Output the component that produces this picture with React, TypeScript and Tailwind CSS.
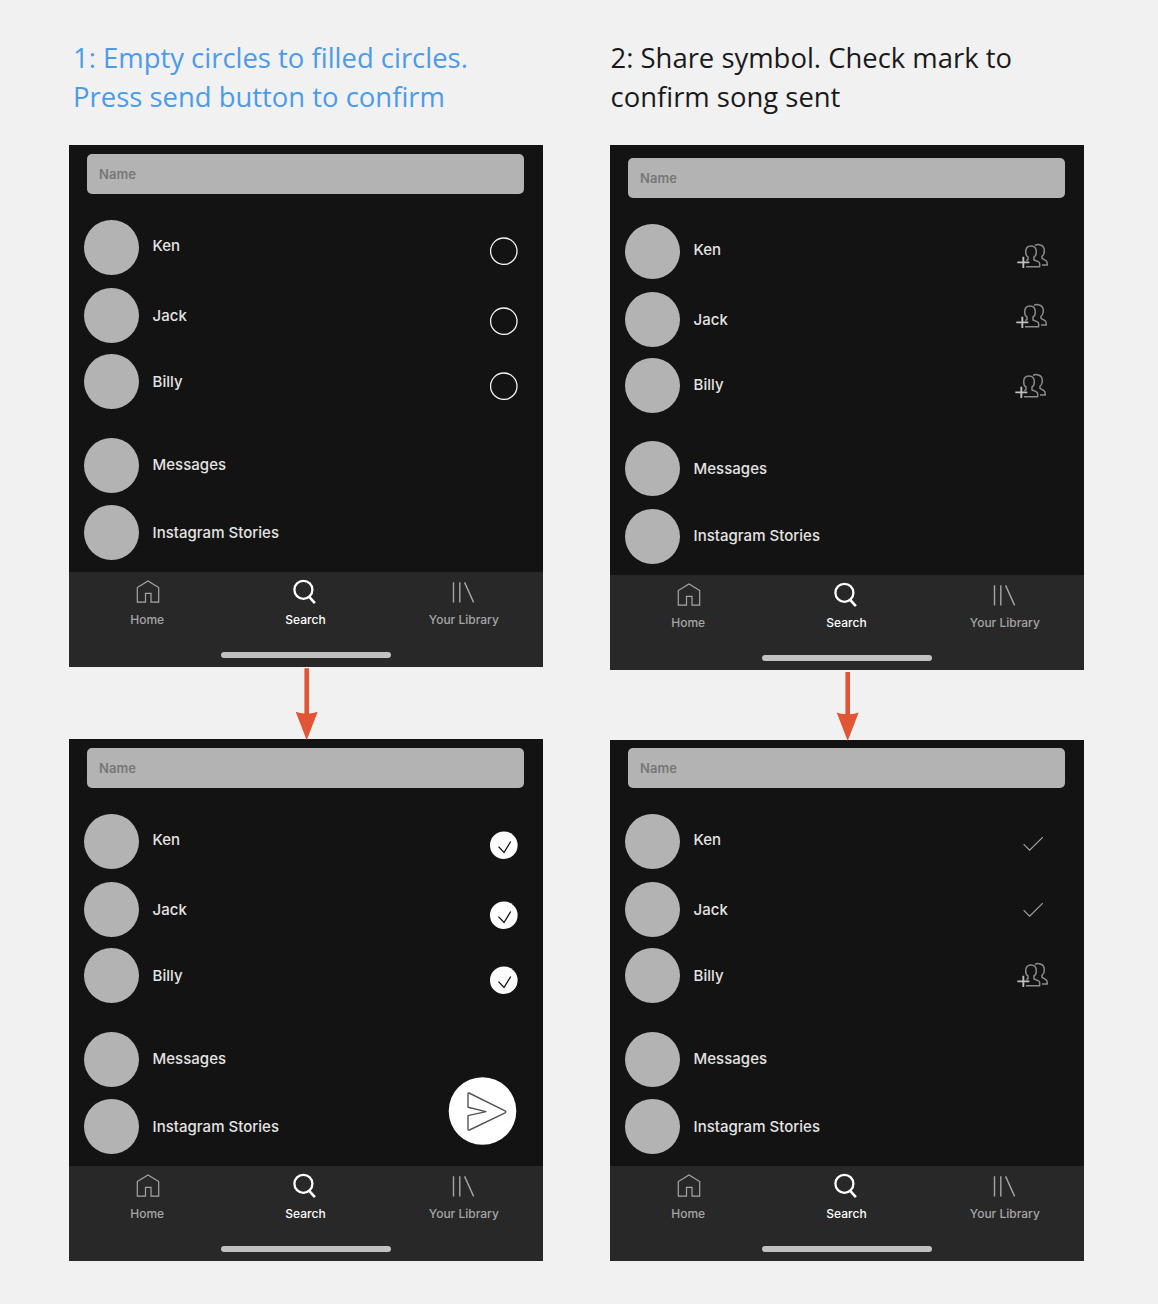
import type { ReactNode } from 'react';

type Status = 'empty' | 'filled' | 'share' | 'check' | 'none';

const contacts = [
  { name: 'Ken', gap: 'mt-[26.4px]', text: 'pt-[14px]' },
  { name: 'Jack', gap: 'mt-[12.5px]', text: 'pt-[16.5px]' },
  { name: 'Billy', gap: 'mt-[11.2px]', text: 'pt-[15.5px]' },
  { name: 'Messages', gap: 'mt-[28.6px]', text: 'pt-[15.5px]' },
  { name: 'Instagram Stories', gap: 'mt-[12.5px]', text: 'pt-[15.5px]' },
];

function ShareIcon() {
  return (
    <svg className="h-[26px] w-8" viewBox="50 38 96 78" fill="none" stroke="#8c8c8c" strokeWidth="4.4" strokeLinejoin="round">
      <path d="M77 109H118V100Q118 96 113 94L101 89V80C106 77 108 71 108 65C108 53 102 47 92 47C82 47 76 53 76 65C76 71 78 77 83 80V88L78 91" />
      <path d="M104 45C109 42 116 42 120 44C128 46 132 52 132 62C132 69 130 74 125 78V84L137 91Q141 94 141 104H125" />
      <path d="M51 96H87M69 79V113" stroke="#c0c0c0" strokeWidth="5.6" />
    </svg>
  );
}

function StatusMark({ status }: { status: Status }) {
  if (status === 'empty')
    return (
      <svg className="size-7" viewBox="0 0 28 28" fill="none">
        <circle cx="13.8" cy="14.2" r="13.2" stroke="#f2f2f2" strokeWidth="1.3" />
      </svg>
    );
  if (status === 'filled')
    return (
      <svg className="size-7" viewBox="0 0 28 28" fill="none">
        <circle cx="13.8" cy="14.2" r="13.8" fill="#fff" />
        <path d="M8.5 15.6L14 21.5L20.7 10.5" stroke="#111" strokeWidth="1.3" />
      </svg>
    );
  if (status === 'check')
    return (
      <svg className="h-4 w-5" viewBox="0 0 20 16" fill="none">
        <path d="M.6 8.2L6.6 14.2L19.8 1.2" stroke="#a5a5a5" strokeWidth="1.1" />
      </svg>
    );
  if (status === 'share') return <ShareIcon />;
  return null;
}

function NavItem({ label, active = false, children }: { label: string; active?: boolean; children: ReactNode }) {
  return (
    <div className={`flex flex-col items-center ${active ? 'text-white' : 'text-[#a5a5a5]'}`}>
      <svg className="h-6 w-7 overflow-visible" viewBox="0 0.8 28 24" fill="none" stroke="currentColor" strokeWidth="1.2">
        {children}
      </svg>
      <span className="mt-2 text-[12px] leading-4 font-medium">{label}</span>
    </div>
  );
}

function SendButton() {
  return (
    <button aria-label="Send" className="absolute top-[338px] left-[379.5px] size-[68px]">
      <svg className="size-[68px] overflow-visible" viewBox="0.5 0 68 68" fill="none" stroke="#555" strokeWidth="1.4" strokeLinejoin="round">
        <circle cx="34" cy="34" r="33.8" fill="#fff" stroke="none" />
        <path d="M20.5 16Q19.5 15.6 19.5 17V30.2L37.5 34.6L19.5 38.6V52Q19.5 53.6 21 53L56.6 35.8Q58.2 34.8 56.6 33.8Z" />
      </svg>
    </button>
  );
}

function Screen({ className, marks, offsets, send = false }: { className: string; marks: Status[]; offsets: string[]; send?: boolean }) {
  return (
    <section className={`relative flex w-[474px] flex-col bg-[#131313] ${className}`}>
      <div className="mr-[19px] ml-[18px] flex h-10 shrink-0 items-center rounded-[5px] bg-[#b3b3b3] pt-px pl-3 text-[13px] font-semibold tracking-[0.1px] text-[#777]">
        Name
      </div>
      <ul className="flex flex-col pl-[14.75px]">
        {contacts.map((c, i) => (
          <li key={c.name} className={`flex h-[55px] items-start ${c.gap}`}>
            <div className="size-[55px] shrink-0 rounded-full bg-[#b3b3b3]" />
            <span className={`ml-[13.8px] text-[15px] leading-6 font-medium tracking-[0.02px] text-[#e4e4e4] ${c.text}`}>{c.name}</span>
            <div className={`ml-auto ${offsets[i] ?? ''}`}>
              <StatusMark status={marks[i] ?? 'none'} />
            </div>
          </li>
        ))}
      </ul>
      <nav className="mt-[11.4px] flex grow flex-col bg-[#282828] pt-2">
        <div className="-ml-px grid grid-cols-3">
          <NavItem label="Home">
            <path d="M4.3 23V8.4L15 1.7L25.7 8.4V23H18V14.2H12.5V23Z" />
          </NavItem>
          <NavItem label="Search" active>
            <circle cx="12.4" cy="10.6" r="9" strokeWidth="2.3" />
            <path d="M18.2 17.6L23.9 24" strokeWidth="2.6" />
          </NavItem>
          <NavItem label="Your Library">
            <path d="M3.5 3V23.2M9.8 3V23.2M14.6 3.2L23.6 23.2" strokeWidth="1.4" />
          </NavItem>
        </div>
        <div className="mt-6 ml-[152px] h-[6px] w-[170px] rounded-full bg-[#c1c1c1]" />
      </nav>
      {send && <SendButton />}
    </section>
  );
}

function Arrow({ className }: { className: string }) {
  return (
    <div className={`relative z-10 ${className}`}>
      <svg className="h-[72px] w-[22px] overflow-visible" viewBox="0.3 0.7 22 72" fill="#e15535">
        <path d="M8.7 0H13.3V45.2Q17.6 45 22 43.5L11 72L0 43.5Q4.4 45 8.7 45.2Z" />
      </svg>
    </div>
  );
}

function ShortArrow({ className }: { className: string }) {
  return (
    <div className={`relative z-10 ${className}`}>
      <svg className="h-[70px] w-[22px] overflow-visible" viewBox="0.3 0 22 70" fill="#e15535">
        <path d="M8.7 0H13.3V42.2Q17.6 42 22 40.5L11 69L0 40.5Q4.4 42 8.7 42.2Z" />
      </svg>
    </div>
  );
}

export default function App() {
  return (
    <main className="flex h-[1304px] w-[1158px] gap-[67px] overflow-hidden bg-[#f1f1f1] pt-[38px] pl-[69px] font-['Inter',sans-serif]">
      <div className="flex w-[474px] flex-col">
        <h2 className="h-[107px] pl-1 font-['Open_Sans',sans-serif] text-[27.45px] leading-[39px] whitespace-nowrap text-[#4b9bea]">
          1: Empty circles to filled circles.
          <br />
          Press send button to confirm
        </h2>
        <Screen
          className="h-[522px] pt-[9.1px]"
          marks={['empty', 'empty', 'empty']}
          offsets={['mt-[16.5px] mr-[25px]', 'mt-[19px] mr-[25px]', 'mt-[18px] mr-[25px]']}
        />
        <Arrow className="h-[72px] pt-[1.5px] pl-[226.5px]" />
        <Screen
          className="h-[522px] pt-[9.1px]"
          marks={['filled', 'filled', 'filled']}
          offsets={['mt-[16.5px] mr-[25px]', 'mt-[19px] mr-[25px]', 'mt-[18px] mr-[25px]']}
          send
        />
      </div>
      <div className="flex w-[474px] flex-col">
        <h2 className="h-[107px] pl-[0.5px] font-['Open_Sans',sans-serif] text-[27.45px] leading-[39px] whitespace-nowrap text-[#1a1a1a]">
          2: Share symbol. Check mark to
          <br />
          confirm song sent
        </h2>
        <Screen
          className="h-[525px] pt-[12.75px]"
          marks={['share', 'share', 'share']}
          offsets={['mt-[19px] mr-[35px]', 'mt-[11.5px] mr-[36px]', 'mt-[15px] mr-[37px]']}
        />
        <ShortArrow className="h-[70px] pt-[2px] pl-[226.5px]" />
        <Screen
          className="h-[521px] pt-[8.1px]"
          marks={['check', 'check', 'share']}
          offsets={['mt-[21.5px] mr-[41px]', 'mt-[20px] mr-[41px]', 'mt-[14px] mr-[35px]']}
        />
      </div>
    </main>
  );
}
